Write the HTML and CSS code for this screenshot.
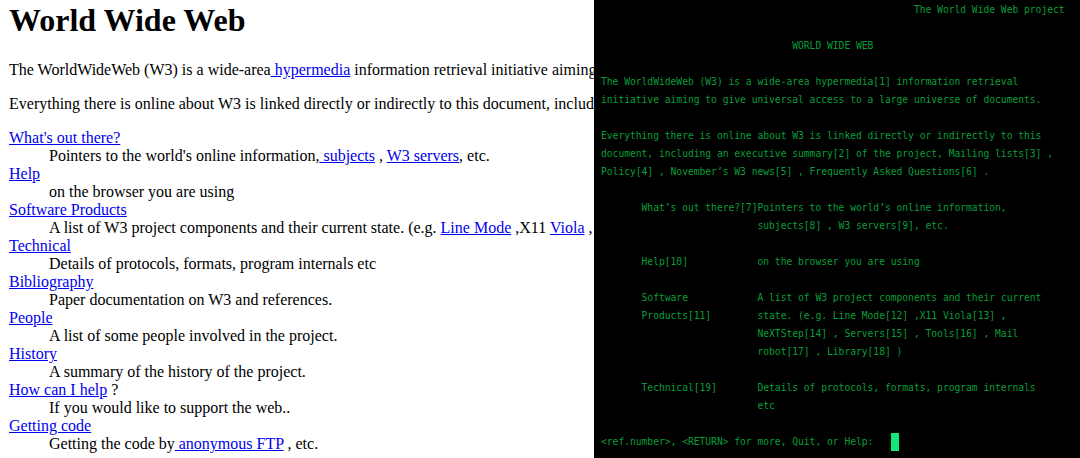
FILE: index.html
```html
<!DOCTYPE html>
<html>
<head>
<meta charset="utf-8">
<title>World Wide Web</title>
<link rel="stylesheet" href="styles.css">
</head>
<body>
<div class="screen">
  <div class="web">
    <div class="page">
      <h1 class="title">World Wide Web</h1>
      <p class="para">The WorldWideWeb (W3) is a wide-area<a href="#"> hypermedia</a> information retrieval initiative aiming to give universal access to a large universe of documents.</p>
      <p class="para">Everything there is online about W3 is linked directly or indirectly to this document, including an <a href="#">executive summary</a> of the project, <a href="#">Mailing lists</a> , <a href="#">Policy</a> , November's <a href="#">W3 news</a> , <a href="#">Frequently Asked Questions</a> .</p>
      <dl class="list">
        <dt><a href="#">What's out there?</a></dt>
        <dd>Pointers to the world's online information,<a href="#"> subjects</a> , <a href="#">W3 servers</a>, etc.</dd>
        <dt><a href="#">Help</a></dt>
        <dd>on the browser you are using</dd>
        <dt><a href="#">Software Products</a></dt>
        <dd>A list of W3 project components and their current state. (e.g. <a href="#">Line Mode</a> ,X11 <a href="#">Viola</a> , <a href="#">NeXTStep</a> , <a href="#">Servers</a> , <a href="#">Tools</a> ,<a href="#"> Mail robot</a> ,<a href="#"> Library</a> )</dd>
        <dt><a href="#">Technical</a></dt>
        <dd>Details of protocols, formats, program internals etc</dd>
        <dt><a href="#">Bibliography</a></dt>
        <dd>Paper documentation on W3 and references.</dd>
        <dt><a href="#">People</a></dt>
        <dd>A list of some people involved in the project.</dd>
        <dt><a href="#">History</a></dt>
        <dd>A summary of the history of the project.</dd>
        <dt><a href="#">How can I help</a> ?</dt>
        <dd>If you would like to support the web..</dd>
        <dt><a href="#">Getting code</a></dt>
        <dd>Getting the code by<a href="#"> anonymous FTP</a> , etc.</dd>
      </dl>
    </div>
  </div>
  <div class="term">
<pre class="tty">                                                      The World Wide Web project

                                 WORLD WIDE WEB

The WorldWideWeb (W3) is a wide-area hypermedia[1] information retrieval
initiative aiming to give universal access to a large universe of documents.

Everything there is online about W3 is linked directly or indirectly to this
document, including an executive summary[2] of the project, Mailing lists[3] ,
Policy[4] , November’s W3 news[5] , Frequently Asked Questions[6] .

       What’s out there?[7]Pointers to the world’s online information,
                           subjects[8] , W3 servers[9], etc.

       Help[10]            on the browser you are using

       Software            A list of W3 project components and their current
       Products[11]        state. (e.g. Line Mode[12] ,X11 Viola[13] ,
                           NeXTStep[14] , Servers[15] , Tools[16] , Mail
                           robot[17] , Library[18] )

       Technical[19]       Details of protocols, formats, program internals
                           etc

&lt;ref.number&gt;, &lt;RETURN&gt; for more, Quit, or Help:   <span class="cursor"></span></pre>
  </div>
</div>
</body>
</html>
```

FILE: styles.css
```css
html, body {
  margin: 0;
  padding: 0;
  background: #000;
}

.screen {
  display: flex;
  width: 1080px;
  height: 458px;
  overflow: hidden;
}

.web {
  flex: 0 0 594px;
  background: #fff;
  overflow: hidden;
}

.page {
  padding: 2px 8px 0 9px;
  font-family: "Liberation Serif", "Times New Roman", serif;
  font-size: 16px;
  line-height: 18px;
  color: #000;
  white-space: nowrap;
}

.page a {
  color: #0000ee;
  text-decoration: underline;
}

.title {
  font-size: 32px;
  font-weight: bold;
  line-height: 37px;
  margin: 0 0 22px 0;
}

.para {
  margin: 16px 0;
}

.list {
  margin: 16px 0;
}

.list dt {
  margin: 0;
}

.list dd {
  margin: 0 0 0 40px;
}

.term {
  flex: 1 1 auto;
  background: #000;
  overflow: hidden;
}

.tty {
  margin: 0;
  padding: 1px 0 0 7px;
  font-family: "DejaVu Sans Mono", "Liberation Mono", monospace;
  font-size: 9.64px;
  line-height: 18px;
  color: #0a9e3a;
  white-space: pre;
}

.cursor {
  display: inline-block;
  width: 8px;
  height: 18px;
  vertical-align: top;
  background: #12e87a;
}
```
